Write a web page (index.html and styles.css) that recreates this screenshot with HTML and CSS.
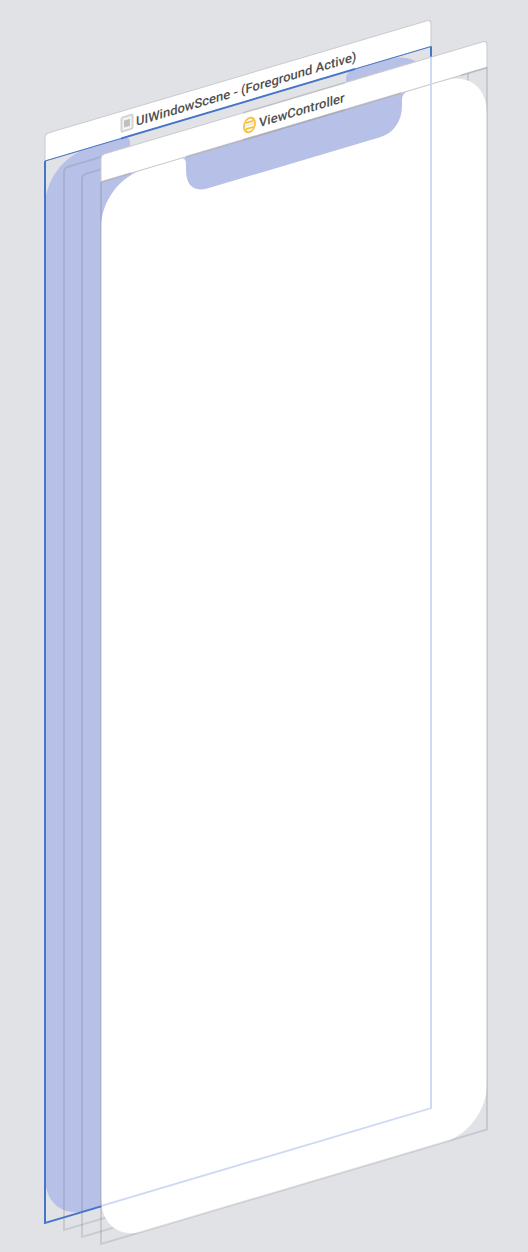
FILE: index.html
```html
<!DOCTYPE html>
<html lang="en">
<head>
<meta charset="utf-8">
<title>View Hierarchy</title>
<link rel="stylesheet" href="styles.css">
</head>
<body>
<main class="canvas">
<svg class="scene" viewBox="0 0 528 1252" role="img" aria-label="Exploded view hierarchy">
  <defs>
    <path id="screen" d="M0 46C0 20 18 0 43 0H80Q85 1 85 7V13C85 29 93 38 107 38H279C293 38 301 28 301 13V7Q301 1 307 0H343C368 0 386 20 386 46V1016C386 1042 368 1062 343 1062H43C18 1062 0 1042 0 1016Z"/>
    <path id="header" d="M0 0V-23Q0 -27 4 -27H382Q386 -27 386 -23V0Z"/>
    <clipPath id="front-shape"><use href="#screen"/><use href="#header"/></clipPath>
  </defs>

  <g transform="matrix(1 -0.2965 0 1 45 161)">
    <use class="window-fill" href="#screen"/>
    <use class="header" href="#header"/>
    <path class="selection" d="M0 0V1062H386V0"/>
    <path class="selection-thin" d="M0 0H76M310 0H386"/>
    <path class="selection" d="M76 0H310"/>
    <g class="scene-icon">
      <rect x="76.5" y="-20.5" width="11" height="14" rx="1"/>
      <rect class="scene-icon-core" x="79" y="-17" width="6" height="7"/>
    </g>
    <text class="title" x="91" y="-8">UIWindowScene - (Foreground Active)</text>
  </g>

  <g class="wire">
    <path transform="matrix(1 -0.2965 0 1 64 168)" d="M0 4Q0 0 4 0H386V1062H0Z"/>
    <path transform="matrix(1 -0.2965 0 1 82 175)" d="M0 4Q0 0 4 0H386V1062H0Z"/>
  </g>

  <g transform="matrix(1 -0.2965 0 1 101 182)">
    <use class="front-fill" href="#screen"/>
    <use class="header" href="#header"/>
    <path class="frame" d="M0 0V1062H386V0"/>
    <path class="frame" d="M0 0H30M85 0H300M360 0H386"/>
    <path class="title-edge" d="M142 -27H244M142 0H244"/>
    <g class="controller-icon">
      <ellipse cx="148.5" cy="-13" rx="5.5" ry="7"/>
      <path d="M145 -16H152M145 -10H152"/>
      <path class="controller-icon-line" d="M143 -13H154"/>
    </g>
    <text class="title" x="158" y="-8">ViewController</text>
    <g clip-path="url(#front-shape)">
      <path class="selection-ghost" transform="translate(-56 -38)" d="M0 0V1062H386V0"/>
    </g>
  </g>
</svg>
</main>
</body>
</html>
```
FILE: styles.css
```css
body {
  margin: 0;
  background: #e1e2e6;
}
.canvas {
  width: 100%;
}
.scene {
  display: block;
  width: 100%;
  height: auto;
}
.window-fill {
  fill: #b7c0e7;
}
.front-fill {
  fill: #ffffff;
}
.header {
  fill: #ffffff;
  stroke: #c9cacd;
  stroke-width: 1px;
}
.selection,
.selection-thin,
.selection-ghost {
  fill: none;
  stroke: #4674cb;
  stroke-width: 2px;
}
.selection-thin {
  stroke-width: 1px;
}
.selection-ghost {
  stroke: #cedaf3;
}
.wire {
  fill: none;
  stroke: #70758a;
  stroke-opacity: 0.22;
  stroke-width: 2px;
}
.frame,
.title-edge {
  fill: none;
  stroke: #70707a;
  stroke-opacity: 0.22;
  stroke-width: 2px;
}
.title-edge {
  stroke-opacity: 0.16;
}
.scene-icon {
  fill: #f4f4f4;
  stroke: #d4d4d4;
  stroke-width: 2px;
}
.scene-icon-core {
  fill: #c0c0c0;
  stroke: none;
}
.controller-icon {
  fill: #ffffff;
  stroke: #f6c347;
  stroke-width: 2px;
}
.controller-icon-line {
  stroke: #ded8c8;
  stroke-width: 1px;
}
.title {
  fill: #505050;
  font: 500 13px Roboto, "Liberation Sans", sans-serif;
}
```
